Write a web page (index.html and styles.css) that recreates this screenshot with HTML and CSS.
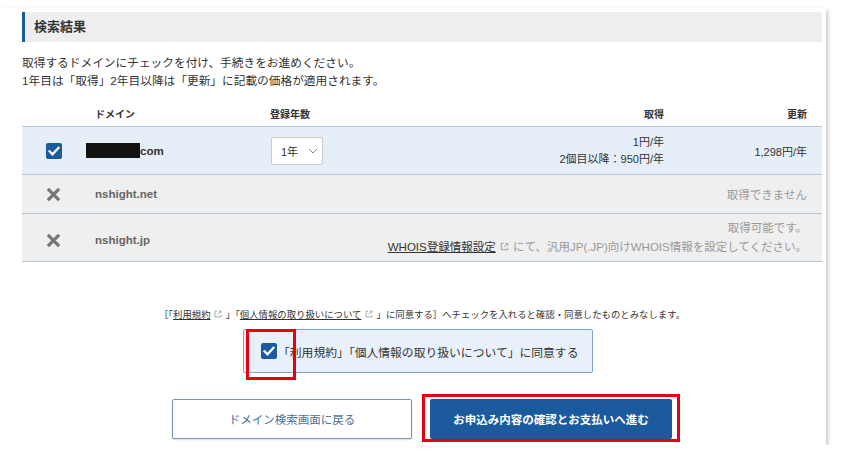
FILE: index.html
```html
<!DOCTYPE html>
<html lang="ja">
<head>
    <meta charset="UTF-8">
    <meta name="viewport" content="width=device-width, initial-scale=1.0">
    <title>検索結果</title>
    <link rel="stylesheet" href="styles.css">
</head>
<body>
    <div class="card">
        <h2 class="section-title">検索結果</h2>
        <p class="lead">取得するドメインにチェックを付け、手続きをお進めください。<br>1年目は「取得」2年目以降は「更新」に記載の価格が適用されます。</p>

        <div class="result-table">
            <div class="row head">
                <div></div>
                <div>ドメイン</div>
                <div>登録年数</div>
                <div class="num">取得</div>
                <div class="num">更新</div>
            </div>

            <div class="row selected">
                <div class="mark">
                    <span class="check">
                        <svg viewBox="0 0 16 16" width="16" height="16"><path d="M3.5 8.3l3 3 6-6.4" fill="none" stroke="#fff" stroke-width="2.2" stroke-linecap="square"/></svg>
                    </span>
                </div>
                <div class="domain"><span class="redact"></span>com</div>
                <div>
                    <span class="select">1年
                        <svg viewBox="0 0 10 6" width="10" height="6"><path d="M1 1l4 4 4-4" fill="none" stroke="#8a8a8a" stroke-width="1"/></svg>
                    </span>
                </div>
                <div class="num price">1円/年<br>2個目以降：950円/年</div>
                <div class="num">1,298円/年</div>
            </div>

            <div class="row disabled short">
                <div class="mark">
                    <svg viewBox="0 0 16 16" width="15" height="15"><path d="M2 2l12 12M14 2L2 14" stroke="#777" stroke-width="3.4"/></svg>
                </div>
                <div class="domain">nshight.net</div>
                <div></div>
                <div></div>
                <div class="num muted">取得できません</div>
            </div>

            <div class="row disabled">
                <div class="mark low">
                    <svg viewBox="0 0 16 16" width="15" height="15"><path d="M2 2l12 12M14 2L2 14" stroke="#777" stroke-width="3.4"/></svg>
                </div>
                <div class="domain low">nshight.jp</div>
                <div class="num muted wide">取得可能です。<br><a href="#" class="link">WHOIS登録情報設定</a>
                    <svg class="ext" viewBox="0 0 12 12" width="11" height="11"><path d="M5 2.5H2.5v7h7V7M7 2.5h2.5V5M9.5 2.5L5.5 6.5" fill="none" stroke="#999" stroke-width="1"/></svg>
                    にて、汎用JP(.JP)向けWHOIS情報を設定してください。</div>
            </div>
        </div>

        <div class="agree">
            <p class="agree-note">［「<a href="#" class="link">利用規約</a>
                <svg class="ext" viewBox="0 0 12 12" width="10" height="10"><path d="M5 2.5H2.5v7h7V7M7 2.5h2.5V5M9.5 2.5L5.5 6.5" fill="none" stroke="#999" stroke-width="1"/></svg>
                」「<a href="#" class="link">個人情報の取り扱いについて</a>
                <svg class="ext" viewBox="0 0 12 12" width="10" height="10"><path d="M5 2.5H2.5v7h7V7M7 2.5h2.5V5M9.5 2.5L5.5 6.5" fill="none" stroke="#999" stroke-width="1"/></svg>
                」に同意する］へチェックを入れると確認・同意したものとみなします。</p>
            <label class="agree-box">
                <span class="check">
                    <svg viewBox="0 0 16 16" width="16" height="16"><path d="M3.5 8.3l3 3 6-6.4" fill="none" stroke="#fff" stroke-width="2.2" stroke-linecap="square"/></svg>
                </span>
                <span>「利用規約」「個人情報の取り扱いについて」に同意する</span>
                <span class="highlight small"></span>
            </label>
        </div>

        <div class="actions">
            <button class="btn btn-back">ドメイン検索画面に戻る</button>
            <div class="btn-wrap">
                <button class="btn btn-next">お申込み内容の確認とお支払いへ進む</button>
                <span class="highlight big"></span>
            </div>
        </div>
    </div>
</body>
</html>
```

FILE: styles.css
```css
body {
    margin: 0;
    background-color: #fff;
    font-family: "Liberation Sans", "Noto Sans CJK JP", sans-serif;
    color: #333;
}
.card {
    width: 826px;
    margin-top: 8px;
    padding: 4px 4px 6px 22px;
    box-sizing: border-box;
    background-color: #fff;
    box-shadow: 2px 2px 4px rgba(0, 0, 0, 0.22);
}
.section-title {
    margin: 0;
    height: 30px;
    line-height: 30px;
    padding-left: 9px;
    border-left: 3px solid #1b5a9c;
    background-color: #eee;
    font-size: 13px;
    font-weight: bold;
    color: #333;
}
.lead {
    margin: 12px 0 0;
    font-size: 11.7px;
    line-height: 18px;
}
.result-table {
    margin-top: 10px;
    border-bottom: 1px solid #b8c7d6;
}
.row {
    display: grid;
    grid-template-columns: 73px 175px 130px 264px 143px;
    padding-right: 15px;
    align-items: center;
    height: 47px;
    border-top: 1px solid #b8c7d6;
    font-size: 11px;
}
.row.head {
    height: 26px;
    border-top: none;
    font-size: 10px;
    font-weight: bold;
}
.row.selected {
    background-color: #e6eef8;
}
.row.disabled {
    background-color: #efefef;
}
.row.short {
    height: 38px;
}
.num {
    text-align: right;
}
.price {
    line-height: 17px;
}
.muted {
    color: #999;
    font-size: 11.5px;
}
.wide {
    grid-column: 3 / 6;
    line-height: 19px;
}
.mark {
    display: flex;
    padding-left: 24px;
}
.low {
    padding-top: 5px;
}
.check {
    display: inline-flex;
    width: 16px;
    height: 16px;
    border-radius: 2px;
    background-color: #1b5a9c;
}
.domain {
    font-size: 11.5px;
    font-weight: bold;
}
.row.disabled .domain {
    color: #666;
}
.redact {
    display: inline-block;
    width: 54px;
    height: 15px;
    margin-left: -9px;
    vertical-align: -3px;
    background-color: #111;
}
.select {
    display: inline-flex;
    align-items: center;
    gap: 10px;
    width: 52px;
    height: 28px;
    box-sizing: border-box;
    padding-left: 9px;
    margin-left: 1px;
    background-color: #fff;
    border: 1px solid #ccc;
    border-radius: 2px;
    font-size: 11px;
    color: #333;
}
.link {
    color: #333;
    text-decoration: underline;
}
.ext {
    vertical-align: -1px;
}
.agree {
    margin-top: 46px;
    display: flex;
    flex-direction: column;
    align-items: center;
}
.agree-note {
    margin: 0;
    font-size: 9.4px;
    line-height: 14px;
}
.agree-box {
    position: relative;
    display: flex;
    align-items: center;
    gap: 1px;
    width: 350px;
    height: 44px;
    box-sizing: border-box;
    margin-top: 7px;
    margin-right: 8px;
    padding-left: 17px;
    background-color: #e8f0fa;
    border: 1px solid #7fa3cb;
    border-radius: 2px;
    font-size: 11.8px;
}
.actions {
    display: flex;
    justify-content: center;
    gap: 18px;
    margin-top: 26px;
}
.btn {
    height: 40px;
    font-family: inherit;
    font-size: 11.5px;
    border-radius: 2px;
    cursor: pointer;
}
.btn-back {
    width: 240px;
    background-color: #fff;
    border: 1px solid #6f95c0;
    color: #4d709a;
    box-shadow: 0 1px 2px rgba(0, 0, 0, 0.15);
}
.btn-wrap {
    position: relative;
    display: flex;
}
.btn-next {
    width: 242px;
    background-color: #1b5a9c;
    border: none;
    color: #fff;
    font-weight: bold;
}
.highlight {
    position: absolute;
    border: 3px solid #e60012;
    pointer-events: none;
}
.highlight.small {
    left: 2px;
    top: -1px;
    width: 44px;
    height: 45px;
}
.highlight.big {
    left: -8px;
    top: -5px;
    width: 252px;
    height: 42px;
}
```
